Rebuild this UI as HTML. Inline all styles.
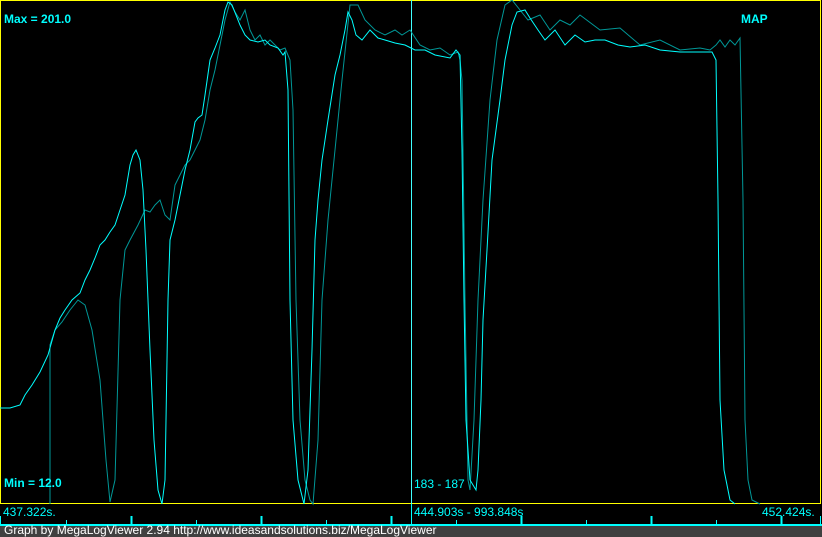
<!DOCTYPE html>
<html><head><style>
html,body{margin:0;padding:0;background:#000;width:822px;height:537px;overflow:hidden;font-family:"Liberation Sans",sans-serif}
.t{position:absolute;color:#00ffff;font-size:12px}
</style></head><body>
<svg width="822" height="537" style="position:absolute;left:0;top:0">
<rect x="0" y="0" width="822" height="537" fill="#000"/>
<rect x="0.5" y="0.5" width="820" height="503" fill="none" stroke="#ffff00" stroke-width="1"/>
<line x1="411.5" y1="0" x2="411.5" y2="520" stroke="#40ffff" stroke-width="1"/>
<polyline fill="none" stroke="#009898" stroke-width="1" points="50,504 50,345 55,330 62,322 70,310 78,300 85,305 92,330 100,380 106,460 110,502 115,480 120,300 125,250 130,240 138,225 145,210 150,212 155,205 160,200 165,215 170,220 175,185 180,175 185,165 190,160 195,150 200,140 205,120 210,90 215,70 220,45 225,20 230,2 235,12 240,20 245,10 250,30 255,40 260,35 265,45 270,40 275,45 280,50 285,48 290,60 293,110 296,300 300,420 305,480 310,500 313,504 318,440 322,300 328,220 335,150 342,80 350,5 358,5 365,20 375,30 385,35 395,30 402,35 410,30 420,45 430,50 440,48 450,55 458,52 460,60 462,80 463,150 465,300 468,480 470,490 474,420 478,300 483,200 490,100 497,40 505,5 512,0 520,10 528,20 540,15 550,30 560,20 570,25 580,15 600,30 620,28 640,45 660,40 680,50 700,48 710,50 716,45 720,40 725,47 730,40 735,45 740,38 743,200 745,420 748,480 752,500 760,504"/>
<polyline fill="none" stroke="#00ffff" stroke-width="1" points="0,408 10,408 20,405 25,395 32,385 40,372 48,355 55,330 60,318 65,310 72,300 80,293 85,280 90,270 95,258 100,245 105,240 110,232 115,225 120,210 125,195 130,165 133,155 136,150 140,160 143,190 146,250 150,350 154,440 158,490 162,504 165,480 168,300 170,240 175,220 180,195 185,170 190,150 195,122 198,118 202,115 205,95 210,60 215,48 220,35 225,10 228,2 232,5 236,15 240,25 245,35 250,40 258,42 265,40 270,45 278,48 283,55 285,52 288,90 290,300 293,420 298,480 304,504 308,470 312,350 315,240 318,200 322,160 328,120 335,75 340,55 345,30 348,12 352,20 356,35 362,40 370,30 378,38 385,40 395,43 405,45 415,50 425,50 435,55 450,58 456,50 460,55 462,150 464,300 466,420 470,480 476,490 478,470 481,400 483,320 487,250 492,160 496,130 500,100 505,60 512,25 517,12 525,10 530,18 538,30 545,40 555,30 565,45 575,35 585,42 595,40 605,40 618,45 630,47 645,45 660,50 680,52 700,52 712,52 716,60 718,200 720,400 724,470 730,500 735,504"/>
<line x1="0" y1="525" x2="822" y2="525" stroke="#00ffff" stroke-width="2"/>
<g stroke="#00ffff" stroke-width="1">
<line x1="0.5" y1="516" x2="0.5" y2="525"/><line x1="820.5" y1="516" x2="820.5" y2="525"/>
<line x1="411.5" y1="504" x2="411.5" y2="525"/>
<line x1="66.5" y1="520" x2="66.5" y2="525"/><line x1="131.5" y1="516" x2="131.5" y2="525" stroke-width="2"/>
<line x1="196.5" y1="520" x2="196.5" y2="525"/><line x1="261.5" y1="516" x2="261.5" y2="525" stroke-width="2"/>
<line x1="326.5" y1="520" x2="326.5" y2="525"/><line x1="391.5" y1="516" x2="391.5" y2="525" stroke-width="2"/>
<line x1="456.5" y1="520" x2="456.5" y2="525"/><line x1="521.5" y1="516" x2="521.5" y2="525" stroke-width="2"/>
<line x1="586.5" y1="520" x2="586.5" y2="525"/><line x1="651.5" y1="516" x2="651.5" y2="525" stroke-width="2"/>
<line x1="716.5" y1="520" x2="716.5" y2="525"/><line x1="781.5" y1="516" x2="781.5" y2="525" stroke-width="2"/>
</g>
<rect x="0" y="526" width="822" height="11" fill="#404040"/>
</svg>
<div class="t" style="left:4px;top:12px;font-weight:bold">Max = 201.0</div>
<div class="t" style="left:741px;top:12px;font-weight:bold">MAP</div>
<div class="t" style="left:4px;top:476px;font-weight:bold">Min = 12.0</div>
<div class="t" style="left:414px;top:477px">183 - 187</div>
<div class="t" style="left:3px;top:505px">437.322s.</div>
<div class="t" style="left:414px;top:505px">444.903s - 993.848s</div>
<div class="t" style="left:762px;top:505px">452.424s.</div>
<div style="position:absolute;left:4px;top:524px;color:#fff;font-size:12px;line-height:13px">Graph by MegaLogViewer 2.94 http://www.ideasandsolutions.biz/MegaLogViewer</div>
</body></html>
